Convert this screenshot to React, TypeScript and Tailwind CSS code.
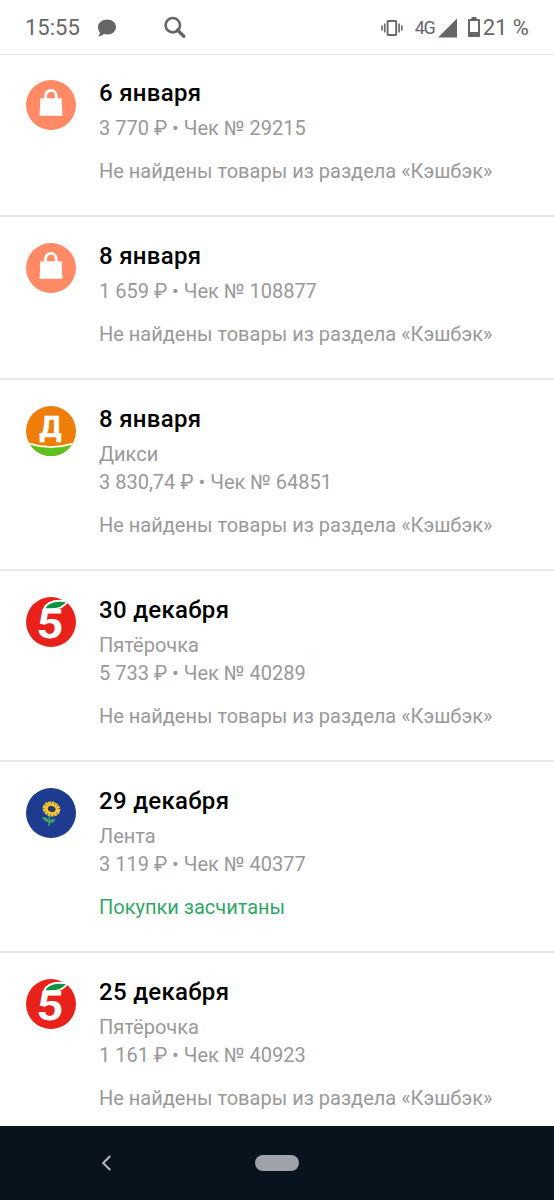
import React from 'react';

type Brand = 'bag' | 'dixy' | 'five' | 'lenta';

interface Receipt {
  id: string;
  brand: Brand;
  date: string;
  store?: string;
  total: string;
  accepted?: boolean;
}

const receipts: Receipt[] = [
  { id: '29215', brand: 'bag', date: '6 января', total: '3 770' },
  { id: '108877', brand: 'bag', date: '8 января', total: '1 659' },
  { id: '64851', brand: 'dixy', date: '8 января', store: 'Дикси', total: '3 830,74' },
  { id: '40289', brand: 'five', date: '30 декабря', store: 'Пятёрочка', total: '5 733' },
  { id: '40377', brand: 'lenta', date: '29 декабря', store: 'Лента', total: '3 119', accepted: true },
  { id: '40923', brand: 'five', date: '25 декабря', store: 'Пятёрочка', total: '1 161' },
];

const BagLogo = () => (
  <>
    <circle cx="25" cy="25" r="25" fill="#ff8a65" />
    <path d="M14.4 18.3h21.2l.8 17.4H13.6z" fill="#fff" />
    <path d="M19.6 20v-4.300a5.300 5.300 0 0 1 10.600 0V20" fill="none" stroke="#fff" strokeWidth="2.8" />
  </>
);

const DixyLogo = () => (
  <>
    <circle cx="25" cy="25" r="25" fill="#ef7d0a" />
    <path d="M3.4 37.6Q25 44.5 46.6 37.6A25 25 0 0 1 3.4 37.6z" fill="#5fc11e" />
    <path d="M3.4 37.6Q25 44.5 46.6 37.6" fill="none" stroke="#fffbe0" strokeWidth="1.8" />
    <text x="24.5" y="31" textAnchor="middle" fontSize="29.5" fontWeight="700" fill="#fff" stroke="#fff" strokeWidth="0.5">
      Д
    </text>
  </>
);

const FiveLogo = () => (
  <>
    <circle cx="25" cy="25" r="25" fill="#e8221b" />
    <text transform="translate(23.5 40.8) skewX(-3) scale(1.14 1)" textAnchor="middle" fontSize="41" fontWeight="700" fill="#fff">
      5
    </text>
    <path d="M18 12C21 4.5 29 2.6 41.5 4.4C38 11 29.5 13.2 18 12z" fill="#0b9444" stroke="#fff" strokeWidth="2" strokeLinejoin="round" />
  </>
);

const LentaLogo = () => (
  <>
    <circle cx="25" cy="25" r="25" fill="#1d3b8f" />
    <ellipse cx="25.5" cy="21" rx="7.4" ry="6" transform="rotate(15 25.5 21)" fill="none" stroke="#f6c62f" strokeWidth="3" strokeDasharray="2.8 0.5" />
    <ellipse cx="25.5" cy="21" rx="6.6" ry="5.2" transform="rotate(15 25.5 21)" fill="#f6c62f" />
    <ellipse cx="25.7" cy="21" rx="4" ry="2.9" transform="rotate(20 25.7 21)" fill="#283a63" />
    <path d="M23.3 28Q23.9 32 22.8 37.8" fill="none" stroke="#3fa56b" strokeWidth="1.6" />
    <path d="M23.2 34.2C19.5 34 17 31.8 16 29C20 28.6 22.6 30.4 23.2 34.2zM23.8 34.8C24 31.8 26 30.8 29.4 31.2C28.8 34 27 35.2 23.8 34.8z" fill="#3fa56b" />
  </>
);

const logos: Record<Brand, React.FC> = {
  bag: BagLogo,
  dixy: DixyLogo,
  five: FiveLogo,
  lenta: LentaLogo,
};

const StatusBar: React.FC = () => (
  <header className="flex h-[55px] shrink-0 items-center border-b border-[#ebebeb] px-[25px] pt-px text-[22px] leading-7 text-[#666]">
    <span className="w-[72px] pt-px">15:55</span>
    <svg className="h-[18px] w-5" viewBox="0 0 20 18" fill="#666">
      <path d="M10.2.4c5 0 8.8 3.3 8.8 7.6s-3.8 7.6-8.8 7.6c-1.2 0-2.3-.2-3.4-.5C5.4 16.8 3.4 17.5 1.2 17.5c1.1-1.2 1.6-2.6 1.7-4C1.8 12.2 1 10.2 1 8 1 3.7 5.2.4 10.2.4z" />
    </svg>
    <svg className="ml-[46px] h-6 w-6" viewBox="0 0 24 24" fill="none" stroke="#666">
      <circle cx="9.8" cy="9.2" r="7.2" strokeWidth="2.6" />
      <path d="M14.5 14l6.3 6.3" strokeWidth="3.4" strokeLinecap="round" />
    </svg>
    <div className="ml-auto flex items-center">
      <svg className="h-[18px] w-[22px]" viewBox="0 0 22 18" fill="none" stroke="#666" strokeWidth="1.6">
        <rect x="6.6" y="2" width="8.6" height="14" rx="0.8" strokeWidth="1.9" />
        <path d="M3.7 4.5v9M1 6.5v5M18.1 4.5v9M20.8 6.5v5" />
      </svg>
      <span className="ml-3 w-[23px] pt-px text-[18px] tracking-[-1.2px]">4G</span>
      <svg className="h-5 w-[19px]" viewBox="0 0 19 20">
        <path d="M19 .5v19H0z" fill="#666" />
      </svg>
      <svg className="ml-[11px] h-[21px] w-3" viewBox="0 0 12 21" fill="#666">
        <path d="M3.5 0h5v2H11q1 0 1 1v16q0 1-1 1H1q-1 0-1-1V3q0-1 1-1h2.5zM2 4v11h8V4z" fillRule="evenodd" />
      </svg>
      <span className="ml-[3px] pt-px">21 %</span>
    </div>
  </header>
);

const ReceiptRow: React.FC<{ receipt: Receipt }> = ({ receipt }) => {
  const Logo = logos[receipt.brand];

  return (
    <li className="flex gap-[23px] border-b-2 border-[#e8e8e8] pt-[25px] pr-6 pb-[30px] pl-[26px]">
      <svg className="mt-[0.5px] h-[50px] w-[50px] shrink-0 overflow-visible" viewBox="0 0 50 50">
        <Logo />
      </svg>
      <div className="text-[20px] leading-7 whitespace-nowrap text-[#999]">
        <h2 className="mb-[7px] text-[24px] leading-7 font-medium tracking-[0.3px] text-black">{receipt.date}</h2>
        {receipt.store && <p>{receipt.store}</p>}
        <p>
          {receipt.total} ₽ • Чек № {receipt.id}
        </p>
        {receipt.accepted ? (
          <p className="mt-[15px] text-[#2fa866]">Покупки засчитаны</p>
        ) : (
          <p className="mt-[15px]">Не найдены товары из раздела «Кэшбэк»</p>
        )}
      </div>
    </li>
  );
};

const App: React.FC = () => {
  return (
    <div className="flex h-[1200px] w-[554px] flex-col overflow-hidden bg-white font-['Roboto',sans-serif]">
      <StatusBar />
      <ul className="-mt-px min-h-0 flex-1 overflow-hidden">
        {receipts.map((receipt) => (
          <ReceiptRow key={receipt.id} receipt={receipt} />
        ))}
      </ul>
      <nav className="grid h-[74px] shrink-0 grid-cols-[255px_44px_255px] items-center bg-[#08131d]">
        <svg className="ml-[101px] h-4 w-[10px]" viewBox="0 0 10 16" fill="none" stroke="#b4b9be" strokeWidth="2">
          <path d="M9.2 1L2.2 8l7 7" />
        </svg>
        <div className="h-4 rounded-full bg-[#a0a2a9]" />
      </nav>
    </div>
  );
};

export default App;
